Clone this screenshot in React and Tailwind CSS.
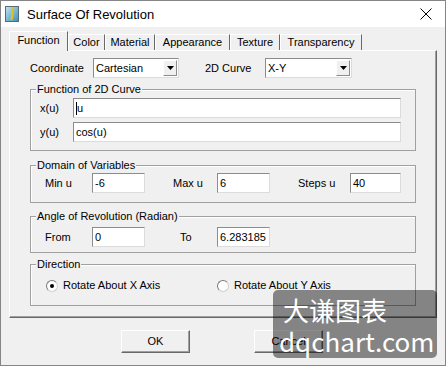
import React from 'react';

function Edit({ w, value, caret }) {
  return (
    <div className={`h-[20px] bg-white border border-t-[#8c8c8c] border-l-[#8c8c8c] border-b-[#dcdcdc] border-r-[#dcdcdc] flex items-center pl-[2px] text-black ${w}`}>
      {caret && <span className="w-[1px] h-[13px] bg-black"></span>}
      <span>{value}</span>
    </div>
  );
}

function Combo({ w, value }) {
  return (
    <div className={`h-[20px] bg-white border border-t-[#8c8c8c] border-l-[#8c8c8c] border-b-[#dcdcdc] border-r-[#dcdcdc] flex items-center justify-between pl-[2px] pr-[1px] ${w}`}>
      <span>{value}</span>
      <div className="w-[14px] h-[16px] bg-[#f0f0f0] border border-t-white border-l-white border-b-[#8c8c8c] border-r-[#8c8c8c] flex items-center justify-center">
        <svg width="7" height="4" viewBox="0 0 7 4"><path d="M0 0h7L3.5 4z" fill="#000" /></svg>
      </div>
    </div>
  );
}

function Group({ title, h, className, children }) {
  return (
    <fieldset className={`ml-[20px] w-[386px] border border-[#a0a0a0] shadow-[inset_1px_1px_0_#ffffff] p-0 ${h} ${className}`}>
      <legend className="ml-[5px] px-[1px] leading-[13px] bg-[#f0f0f0]">{title}</legend>
      {children}
    </fieldset>
  );
}

function Tab({ label, w, active }) {
  if (active) {
    return (
      <div className={`relative z-10 h-[20px] -mb-[1px] bg-[#f0f0f0] border-t border-l border-r border-t-white border-l-white border-r-[#696969] flex justify-center pt-[2px] ${w}`}>
        {label}
      </div>
    );
  }
  return (
    <div className={`h-[16px] bg-[#f0f0f0] border-t border-l border-r border-t-white border-l-white border-r-[#696969] flex justify-center pt-[1px] ${w}`}>
      {label}
    </div>
  );
}

function Radio({ checked, label, w }) {
  return (
    <div className={`flex items-center ${w}`}>
      <span className="w-[12px] h-[12px] rounded-full bg-white border border-t-[#7a7a7a] border-l-[#7a7a7a] border-b-[#d0d0d0] border-r-[#d0d0d0] flex items-center justify-center">
        {checked && <span className="w-[4px] h-[4px] rounded-full bg-black"></span>}
      </span>
      <span className="ml-[5px]">{label}</span>
    </div>
  );
}

export default function App() {
  return (
    <div className="relative w-[446px] h-[366px] border border-[#858585] bg-[#f0f0f0] flex flex-col font-['Liberation_Sans',Arial,sans-serif] text-[11px] leading-[13px] text-black overflow-hidden">
      {/* title bar */}
      <div className="h-[26px] bg-white flex items-center pl-[4px] shrink-0">
        <svg width="14" height="16" viewBox="0 0 14 16">
          <defs>
            <linearGradient id="ic" x1="0" y1="0" x2="1" y2="1">
              <stop offset="0" stopColor="#bfe6f2" />
              <stop offset="1" stopColor="#3b8fb3" />
            </linearGradient>
          </defs>
          <rect x="0.5" y="0.5" width="13" height="15" fill="url(#ic)" stroke="#5a6b74" />
          <path d="M9 2 C4 3, 10 8, 6 14" stroke="#e8c020" strokeWidth="2" fill="none" />
        </svg>
        <span className="ml-[8px] text-[13px] font-['Liberation_Sans',Arial,sans-serif]">Surface Of Revolution</span>
        <svg className="ml-auto mr-[13px]" width="12" height="12" viewBox="0 0 12 12">
          <path d="M0.5 0.5L11.5 11.5M11.5 0.5L0.5 11.5" stroke="#000" strokeWidth="1" />
        </svg>
      </div>

      <div className="px-[8px] pt-[4px]">
        {/* tabs */}
        <div className="flex items-end h-[19px]">
          <Tab label="Function" w="w-[59px]" active />
          <Tab label="Color" w="w-[37px]" />
          <Tab label="Material" w="w-[50px]" />
          <Tab label="Appearance" w="w-[75px]" />
          <Tab label="Texture" w="w-[50px]" />
          <Tab label="Transparency" w="w-[82px]" />
        </div>

        {/* panel */}
        <div className="h-[268px] border border-t-white border-l-white border-r-[#696969] border-b-[#696969] shadow-[inset_-1px_-1px_0_#a0a0a0] flex flex-col">
          <div className="mt-[7px] h-[20px] flex items-center pl-[20px]">
            <span className="w-[63px]">Coordinate</span>
            <Combo w="w-[86px]" value="Cartesian" />
            <span className="ml-[26px] w-[60px]">2D Curve</span>
            <Combo w="w-[87px]" value="X-Y" />
          </div>

          <Group title="Function of 2D Curve" h="h-[68px]" className="mt-[5px]">
            <div className="pl-[9px] pt-[2px] flex flex-col gap-[4px]">
              <div className="flex items-center">
                <span className="w-[33px]">x(u)</span>
                <Edit w="w-[328px]" value="u" caret />
              </div>
              <div className="flex items-center">
                <span className="w-[33px]">y(u)</span>
                <Edit w="w-[328px]" value="cos(u)" />
              </div>
            </div>
          </Group>

          <Group title="Domain of Variables" h="h-[44px]" className="mt-[8px]">
            <div className="pl-[14px] pt-[1px] flex items-center">
              <span className="w-[47px]">Min u</span>
              <Edit w="w-[53px]" value="-6" />
              <span className="ml-[28px] w-[44px]">Max u</span>
              <Edit w="w-[53px]" value="6" />
              <span className="ml-[28px] w-[52px]">Steps u</span>
              <Edit w="w-[51px]" value="40" />
            </div>
          </Group>

          <Group title="Angle of Revolution (Radian)" h="h-[43px]" className="mt-[7px]">
            <div className="pl-[14px] pt-[4px] flex items-center">
              <span className="w-[47px]">From</span>
              <Edit w="w-[53px]" value="0" />
              <span className="ml-[35px] w-[37px]">To</span>
              <Edit w="w-[53px]" value="6.283185" />
            </div>
          </Group>

          <Group title="Direction" h="h-[48px]" className="mt-[5px]">
            <div className="pl-[15px] pt-[8px] flex items-center">
              <Radio w="w-[171px]" checked label="Rotate About X Axis" />
              <Radio label="Rotate About Y Axis" />
            </div>
          </Group>
        </div>

        {/* buttons */}
        <div className="mt-[12px] flex">
          <button className="ml-[112px] w-[69px] h-[23px] bg-[#f0f0f0] border border-t-white border-l-white border-b-[#696969] border-r-[#696969] shadow-[inset_-1px_-1px_0_#a0a0a0] text-[11px]">OK</button>
          <button className="ml-[64px] w-[69px] h-[23px] bg-[#f0f0f0] border border-t-white border-l-white border-b-[#696969] border-r-[#696969] shadow-[inset_-1px_-1px_0_#a0a0a0] text-[11px]">Cancel</button>
        </div>
      </div>

      {/* watermark */}
      <div className="absolute left-[272px] top-[289px] w-[164px] h-[68px] rounded-[5px] bg-[rgba(0,0,0,0.45)] text-white flex flex-col pl-[10px] pt-[4px] font-['Noto_Sans_CJK_SC','Noto_Sans',sans-serif] text-[26px] leading-[31px]">
        <span>大谦图表</span>
        <span className="-ml-[4px]">dqchart.com</span>
      </div>
    </div>
  );
}
